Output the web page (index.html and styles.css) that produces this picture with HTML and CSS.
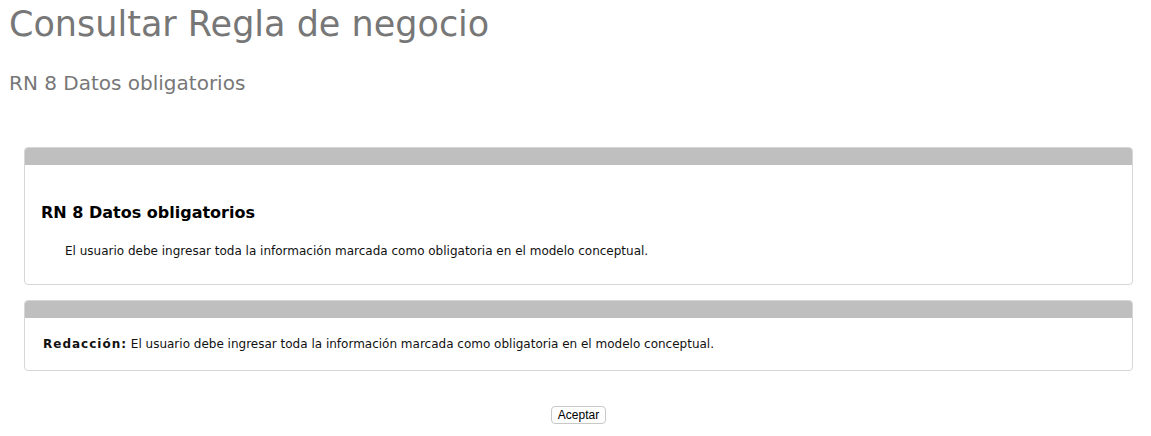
FILE: index.html
```html
<!DOCTYPE html>
<html lang="es">
<head>
<meta charset="utf-8">
<title>Consultar Regla de negocio</title>
<link rel="stylesheet" href="styles.css">
</head>
<body>
<h1 class="title">Consultar Regla de negocio</h1>
<h2 class="subtitle">RN 8 Datos obligatorios</h2>
<div class="panel panel-first">
  <div class="panel-head"></div>
  <div class="panel-body">
    <h3 class="rule-name">RN 8 Datos obligatorios</h3>
    <p class="rule-desc">El usuario debe ingresar toda la información marcada como obligatoria en el modelo conceptual.</p>
  </div>
</div>
<div class="panel">
  <div class="panel-head"></div>
  <div class="panel-body panel-body-short">
    <p class="redaccion"><span class="label">Redacción:</span> El usuario debe ingresar toda la información marcada como obligatoria en el modelo conceptual.</p>
  </div>
</div>
<div class="actions">
  <button class="btn" type="button">Aceptar</button>
</div>
</body>
</html>
```
FILE: styles.css
```css
html, body {
  margin: 0;
  padding: 0;
  background: #fff;
}
body {
  font-family: "DejaVu Sans", Verdana, sans-serif;
  color: #000;
}
.title {
  margin: 0;
  padding: 2px 0 0 9px;
  font-size: 35px;
  font-weight: normal;
  color: #777;
  line-height: 44px;
}
.subtitle {
  margin: 0;
  padding: 25px 0 0 9px;
  font-size: 20px;
  font-weight: normal;
  color: #777;
  line-height: 24px;
}
.panel {
  margin: 0 18px 0 24px;
  border: 1px solid #d3d7da;
  border-radius: 4px;
  overflow: hidden;
}
.panel-first {
  margin-top: 52px;
  margin-bottom: 15px;
}
.panel-head {
  height: 17px;
  background: #bfbfbf;
}
.panel-body {
  padding: 38px 16px 25px 16px;
}
.panel-body-short {
  padding: 18px 18px 18px 18px;
}
.rule-name {
  margin: 0;
  font-size: 16px;
  font-weight: bold;
  line-height: 20px;
}
.rule-desc {
  margin: 20px 0 0 24px;
  font-size: 12px;
  line-height: 16px;
  color: #111;
}
.redaccion {
  margin: 0;
  font-size: 12px;
  line-height: 16px;
  color: #111;
}
.label {
  font-weight: bold;
  letter-spacing: 1px;
}
.actions {
  display: flex;
  justify-content: center;
  padding-top: 35px;
}
.btn {
  font-family: "Liberation Sans", Arial, sans-serif;
  font-size: 12px;
  color: #000;
  background: #fff;
  border: 1px solid #c8c8c8;
  border-radius: 4px;
  padding: 2px 6px;
  height: 18px;
  line-height: 12px;
  margin-left: 6px;
}
```
